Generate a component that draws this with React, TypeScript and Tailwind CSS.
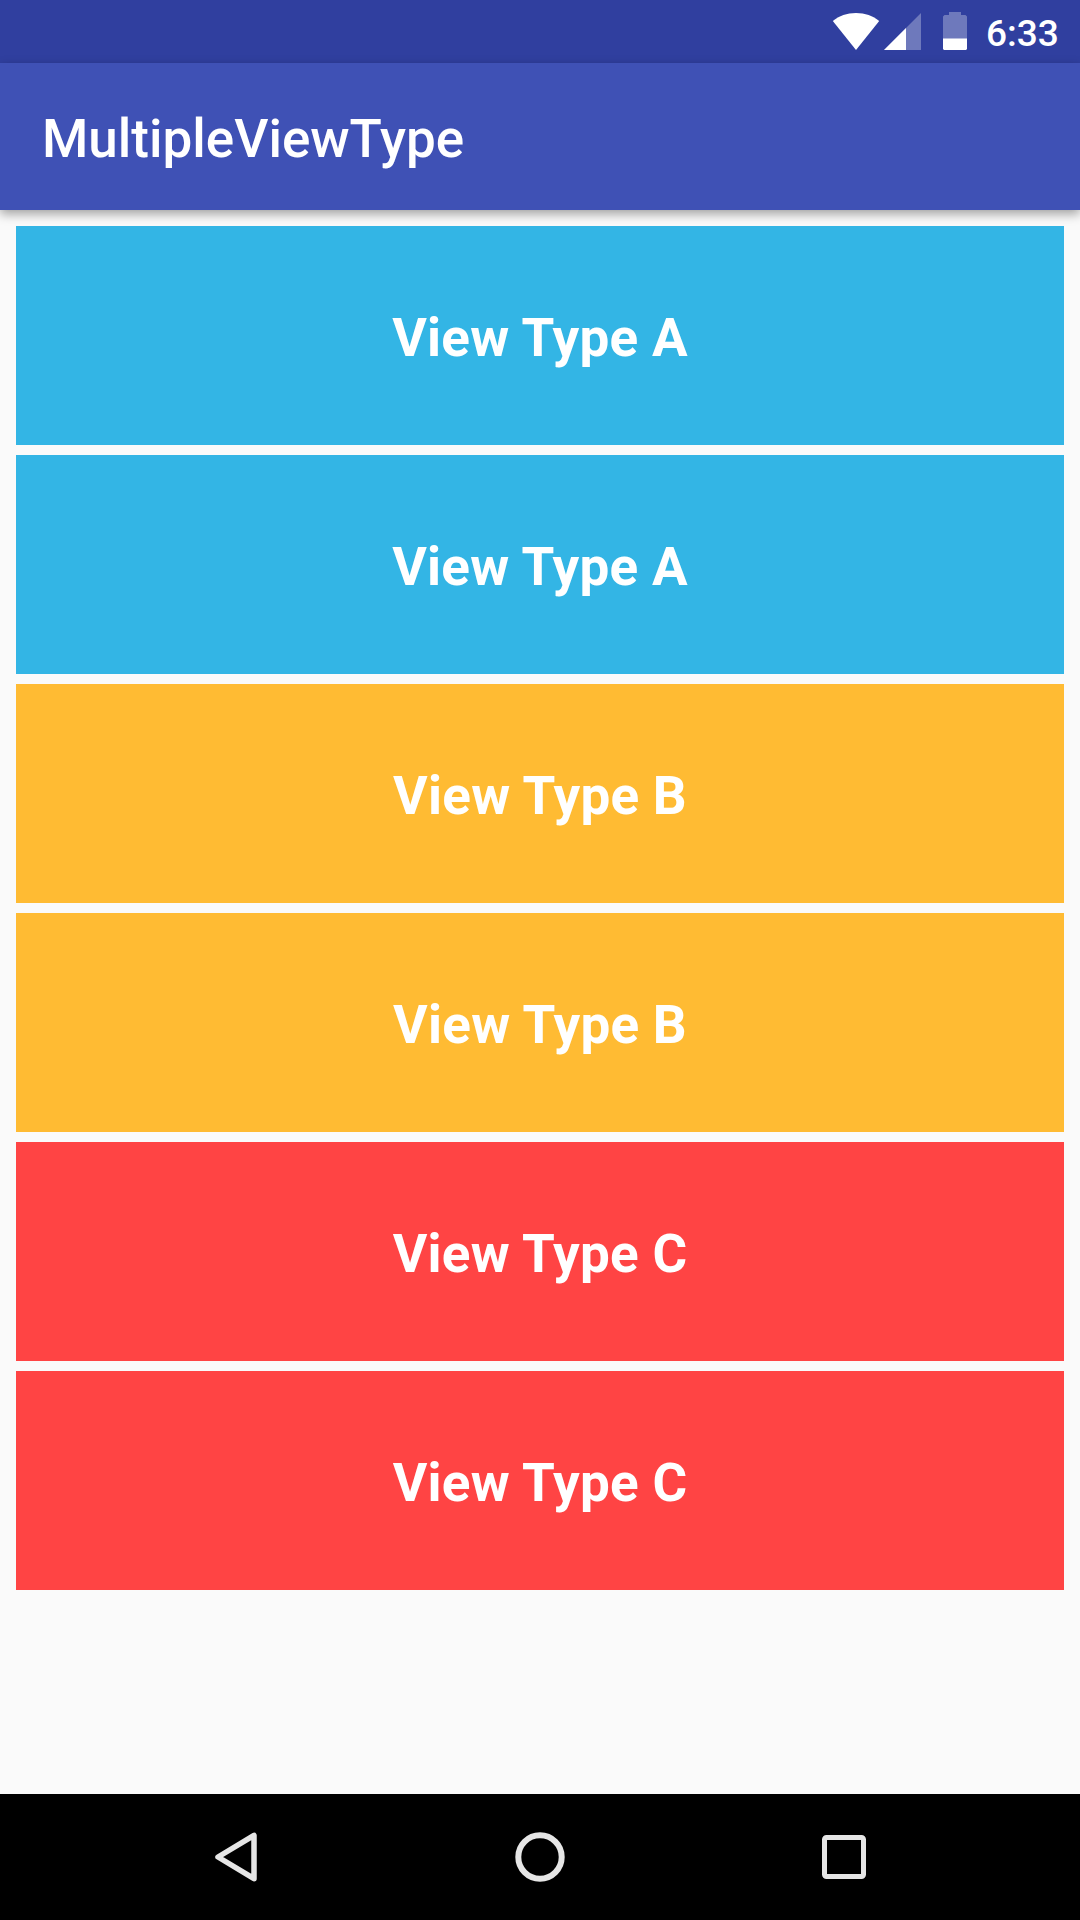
const cards = [
  { label: 'View Type A', color: 'bg-[#33b5e5]' },
  { label: 'View Type A', color: 'bg-[#33b5e5]' },
  { label: 'View Type B', color: 'bg-[#ffbb33]' },
  { label: 'View Type B', color: 'bg-[#ffbb33]' },
  { label: 'View Type C', color: 'bg-[#ff4444]' },
  { label: 'View Type C', color: 'bg-[#ff4444]' },
];

function StatusBar() {
  return (
    <div className="flex h-[63px] shrink-0 items-start justify-end bg-[#303f9f] text-white">
      <svg className="mt-3 mr-[4px] h-[39px] w-[48px]" viewBox="0 0 48 39" fill="currentColor">
        <path d="M24 38 L0.8 9 C7 3.8 15 1 24 1 C33 1 41 3.8 47.2 9 Z" />
      </svg>
      <svg className="mt-3 mr-[22px] h-[39px] w-[37px]" viewBox="0 0 37 39" fill="currentColor">
        <path d="M0 38 L37 1 V38 Z" fillOpacity="0.3" />
        <path d="M0 38 L22 16 V38 Z" />
      </svg>
      <svg className="mt-3 mr-[19px] h-[39px] w-[24px]" viewBox="0 0 24 39" fill="currentColor">
        <path d="M6 0 H18 V3 H22.5 L24 4.5 V27 H0 V4.5 L1.5 3 H6 Z" fillOpacity="0.3" />
        <path d="M0 26.6 H24 V37 L23 38 H1 L0 37 Z" />
      </svg>
      <span className="mt-[12px] w-[94px] text-[37px] leading-[44px] font-medium">6:33</span>
    </div>
  );
}

function NavigationBar() {
  return (
    <nav className="grid h-[126px] shrink-0 grid-cols-[132px_304px_304px_304px] bg-black text-[#e6e6e6]">
      <span />
      <button className="flex items-center justify-start pl-[80px]" aria-label="Back">
        <svg className="h-[56px] w-[48px]" viewBox="0 0 48 56" fill="none" stroke="currentColor" strokeWidth="5.5" strokeLinejoin="round">
          <path d="M6 28 L42 6.3 V49.7 Z" />
        </svg>
      </button>
      <button className="flex items-center justify-start pl-[76px]" aria-label="Home">
        <svg className="h-[56px] w-[56px]" viewBox="0 0 56 56" fill="none" stroke="currentColor" strokeWidth="6">
          <circle cx="28" cy="28" r="21.7" />
        </svg>
      </button>
      <button className="flex items-center justify-start pl-[76px]" aria-label="Recents">
        <svg className="h-[56px] w-[56px]" viewBox="0 0 56 56" fill="none" stroke="currentColor" strokeWidth="5">
          <rect x="8.5" y="8.5" width="39" height="39" rx="2" />
        </svg>
      </button>
    </nav>
  );
}

export default function App() {
  return (
    <div className="flex h-[1920px] w-[1080px] flex-col overflow-hidden bg-[#fafafa] font-['Roboto',sans-serif]">
      <StatusBar />
      <header className="flex h-[147px] shrink-0 items-center bg-[#3f51b5] pl-[42px] shadow-[0_4px_10px_rgba(0,0,0,0.36)]">
        <h1 className="pt-[5px] text-[53px] leading-[62px] font-medium text-white">MultipleViewType</h1>
      </header>
      <main className="flex grow flex-col gap-[10px] px-4 pt-4">
        {cards.map((card, i) => (
          <div key={i} className={`flex h-[219px] shrink-0 items-center justify-center ${card.color}`}>
            <span className="pt-[5px] text-[53px] leading-[62px] font-bold tracking-[0.27px] text-white">{card.label}</span>
          </div>
        ))}
      </main>
      <NavigationBar />
    </div>
  );
}
